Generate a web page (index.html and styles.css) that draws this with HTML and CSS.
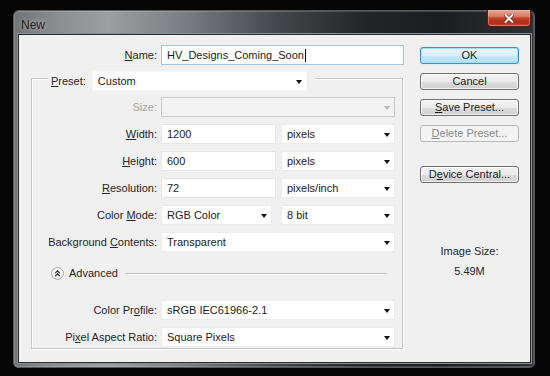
FILE: index.html
```html
<!DOCTYPE html>
<html>
<head>
<meta charset="utf-8">
<title>New</title>
<link rel="stylesheet" href="styles.css">
</head>
<body>
<div class="window">
  <div class="titlebar">
    <span class="title">New</span>
    <div class="close">
      <svg width="10" height="9" viewBox="0 0 10 9"><path d="M1.5 1 L8.5 8 M8.5 1 L1.5 8" stroke="#5a1a10" stroke-width="3.2" stroke-linecap="round"/><path d="M1.5 1 L8.5 8 M8.5 1 L1.5 8" stroke="#ffffff" stroke-width="2" stroke-linecap="round"/></svg>
    </div>
  </div>
  <div class="client">
    <div class="main">
      <div class="name-row">
        <span class="lbl"><u>N</u>ame:</span>
        <div class="field name-field">HV_Designs_Coming_Soon<span class="caret"></span></div>
      </div>
      <div class="group">
        <div class="group-head">
          <span class="head-lbl"><u>P</u>reset:</span>
          <div class="field select preset"><span>Custom</span><i class="arrow"></i></div>
        </div>
        <div class="row first">
          <span class="lbl disabled">Size:</span>
          <div class="field select full off"><span></span><i class="arrow"></i></div>
        </div>
        <div class="row">
          <span class="lbl"><u>W</u>idth:</span>
          <div class="field input w115">1200</div>
          <div class="field select unit"><span>pixels</span><i class="arrow"></i></div>
        </div>
        <div class="row">
          <span class="lbl"><u>H</u>eight:</span>
          <div class="field input w115">600</div>
          <div class="field select unit"><span>pixels</span><i class="arrow"></i></div>
        </div>
        <div class="row">
          <span class="lbl"><u>R</u>esolution:</span>
          <div class="field input w115">72</div>
          <div class="field select unit"><span>pixels/inch</span><i class="arrow"></i></div>
        </div>
        <div class="row">
          <span class="lbl">Color <u>M</u>ode:</span>
          <div class="field select w111"><span>RGB Color</span><i class="arrow"></i></div>
          <div class="field select unit wide-gap"><span>8 bit</span><i class="arrow"></i></div>
        </div>
        <div class="row">
          <span class="lbl">Background <u>C</u>ontents:</span>
          <div class="field select full"><span>Transparent</span><i class="arrow"></i></div>
        </div>
        <div class="adv-row">
          <span class="adv-icon">
            <svg width="13" height="13" viewBox="0 0 13 13"><circle cx="6.5" cy="6.5" r="6" fill="url(#g)" stroke="#a9a9a9"/><defs><linearGradient id="g" x1="0" y1="0" x2="0" y2="1"><stop offset="0" stop-color="#ffffff"/><stop offset="1" stop-color="#e2e2e2"/></linearGradient></defs><path d="M4.2 6.2 L6.5 3.9 L8.8 6.2 M4.2 9.2 L6.5 6.9 L8.8 9.2" fill="none" stroke="#2a2a2a" stroke-width="1.2"/></svg>
          </span>
          <span class="adv-text">Advanced</span>
          <span class="adv-line"></span>
        </div>
        <div class="row profile">
          <span class="lbl">Color Pr<u>o</u>file:</span>
          <div class="field select full"><span>sRGB IEC61966-2.1</span><i class="arrow"></i></div>
        </div>
        <div class="row">
          <span class="lbl">Pi<u>x</u>el Aspect Ratio:</span>
          <div class="field select full"><span>Square Pixels</span><i class="arrow"></i></div>
        </div>
      </div>
    </div>
    <div class="side">
      <div class="btn ok">OK</div>
      <div class="btn">Cancel</div>
      <div class="btn"><u>S</u>ave Preset...</div>
      <div class="btn off"><u>D</u>elete Preset...</div>
      <div class="btn device">D<u>e</u>vice Central...</div>
      <div class="size-label">Image Size:</div>
      <div class="size-value">5.49M</div>
    </div>
  </div>
</div>
</body>
</html>
```

FILE: styles.css
```css
html, body {
  margin: 0;
  padding: 0;
}
body {
  width: 550px;
  height: 376px;
  overflow: hidden;
  background: #060606;
  font-family: "Liberation Sans", Arial, sans-serif;
  font-size: 11px;
  color: #1e1e1e;
}
u { text-decoration: underline; text-underline-offset: 1px; }

.window {
  margin: 10px 0 0 13px;
  width: 522px;
  height: 358px;
  box-sizing: border-box;
  border: 1px solid #55585c;
  border-radius: 6px 6px 5px 5px;
  padding: 0 4px 5px 5px;
  display: flex;
  flex-direction: column;
  background:
    linear-gradient(to right, #6f7276 0%, #8a8d90 8%, #9c9ea1 18%, #7c7f83 32%, #45484c 50%, #222427 68%, #1b1d20 82%, #2e3033 100%);
  box-shadow: inset 0 0 0 1px rgba(255,255,255,0.18);
}

.titlebar {
  height: 24px;
  display: flex;
  justify-content: space-between;
  align-items: flex-start;
  flex: none;
}
.title {
  padding: 7px 0 0 2px;
  font-size: 12px;
  color: #1f2022;
  text-shadow: 0 0 5px rgba(255,255,255,0.55);
}
.close {
  width: 44px;
  height: 17px;
  margin: -1px -1px 0 0;
  box-sizing: border-box;
  border: 1px solid #5e1a12;
  border-top: none;
  border-radius: 0 0 4px 4px;
  background: linear-gradient(#e9a996 0%, #d97a62 40%, #c3412b 50%, #b22c1a 80%, #c4523d 100%);
  display: flex;
  align-items: center;
  justify-content: center;
  box-shadow: inset 0 0 0 1px rgba(255,200,180,0.35);
}

.client {
  flex: 1;
  background: #f0f0f0;
  display: flex;
  padding-top: 10px;
  box-shadow: 0 0 0 1px #2a2c30, 0 0 0 2px #8b8e92;
}

.main { width: 385px; flex: none; }
.side { width: 99px; margin-left: 16px; flex: none; }

.name-row {
  display: flex;
  align-items: center;
  height: 20px;
}
.lbl {
  text-align: right;
  white-space: nowrap;
  color: #262626;
}
.name-row .lbl { width: 138px; margin-right: 4px; }

.field {
  height: 20px;
  box-sizing: border-box;
  background: #ffffff;
  border: 1px solid #e6e6e6;
  display: flex;
  align-items: center;
  padding: 0 4px 0 5px;
  white-space: nowrap;
  color: #1c1c1c;
}
.name-field {
  width: 243px;
  border-color: #a7c6de;
}
.caret {
  display: inline-block;
  width: 1px;
  height: 13px;
  background: #000;
  margin-left: 1px;
}
.select { justify-content: space-between; border-color: #ececec; }
.arrow {
  width: 0;
  height: 0;
  border-left: 3px solid transparent;
  border-right: 3px solid transparent;
  border-top: 4px solid #111;
  margin-top: 2px;
}

.group {
  margin: 13px 0 0 12px;
  width: 372px;
  box-sizing: border-box;
  border: 1px solid #c6c6c6;
  box-shadow: 1px 1px 0 #ffffff, inset 1px 1px 0 #ffffff;
  padding-bottom: 1px;
}
.group-head {
  display: flex;
  align-items: center;
  width: fit-content;
  margin: -8px 0 0 16px;
  padding: 0 8px 0 3px;
  background: #f0f0f0;
  height: 20px;
}
.head-lbl { margin-right: 6px; color: #262626; }
.preset { width: 215px; border-color: #f6f6f6; }

.row {
  display: flex;
  align-items: center;
  height: 20px;
  margin-top: 7px;
}
.row.first { margin-top: 6px; }
.row .lbl { width: 125px; margin-right: 4px; }
.lbl.disabled { color: #a3a3a3; }
.full { width: 234px; }
.w115 { width: 115px; }
.w111 { width: 111px; }
.unit { width: 114px; margin-left: 5px; }
.unit.wide-gap { margin-left: 9px; }
.off {
  background: #f3f3f3;
  border-color: #c9c9c9;
}
.off .arrow { border-top-color: #b8b8b8; }

.adv-row {
  display: flex;
  align-items: center;
  height: 16px;
  margin-top: 13px;
  padding-left: 19px;
}
.adv-icon { width: 13px; height: 13px; display: flex; }
.adv-text { margin-left: 5px; color: #262626; }
.adv-line {
  flex: 1;
  height: 1px;
  background: #c2c2c2;
  margin: 1px 15px 0 7px;
  box-shadow: 0 1px 0 #ffffff;
}
.row.profile { margin-top: 19px; }

.btn {
  height: 17px;
  box-sizing: border-box;
  border: 1px solid #707070;
  border-radius: 3px;
  background: linear-gradient(#f3f3f3 0%, #ebebeb 50%, #dddddd 51%, #d0d0d0 100%);
  box-shadow: inset 0 0 0 1px rgba(255,255,255,0.7);
  text-align: center;
  line-height: 15px;
  color: #1c1c1c;
  margin-top: 9px;
  white-space: nowrap;
}
.btn.ok {
  margin-top: 2px;
  border-color: #3d93c8;
  background: linear-gradient(#eaf6fd 0%, #d9f0fc 50%, #c4e8fb 51%, #b3e0f8 100%);
  box-shadow: inset 0 0 0 1px #9fe0fa, 0 0 1px #74c8ef;
}
.btn.off {
  border-color: #b5b8ba;
  background: #f4f4f4;
  color: #8a8a8a;
  box-shadow: none;
}
.btn.device { margin-top: 24px; }

.size-label {
  margin-top: 61px;
  text-align: center;
  line-height: 14px;
  color: #262626;
}
.size-value {
  margin-top: 6px;
  text-align: center;
  line-height: 14px;
  color: #262626;
}
```
